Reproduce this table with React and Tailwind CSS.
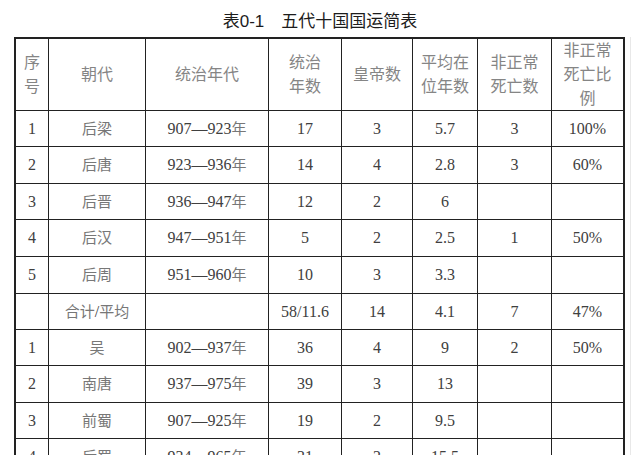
import React from "react";

const rows = [
  ["1", "后梁", "907—923年", "17", "3", "5.7", "3", "100%"],
  ["2", "后唐", "923—936年", "14", "4", "2.8", "3", "60%"],
  ["3", "后晋", "936—947年", "12", "2", "6", "", ""],
  ["4", "后汉", "947—951年", "5", "2", "2.5", "1", "50%"],
  ["5", "后周", "951—960年", "10", "3", "3.3", "", ""],
  ["", "合计/平均", "", "58/11.6", "14", "4.1", "7", "47%"],
  ["1", "吴", "902—937年", "36", "4", "9", "2", "50%"],
  ["2", "南唐", "937—975年", "39", "3", "13", "", ""],
  ["3", "前蜀", "907—925年", "19", "2", "9.5", "", ""],
  ["4", "后蜀", "934—965年", "31", "2", "15.5", "", ""],
];

const headers = [
  ["序", "号"],
  ["朝代"],
  ["统治年代"],
  ["统治", "年数"],
  ["皇帝数"],
  ["平均在", "位年数"],
  ["非正常", "死亡数"],
  ["非正常", "死亡比", "例"],
];

function Rich({ text }) {
  const parts = text.split(/([\u4e00-\u9fff]+)/).filter((p) => p !== "");
  return (
    <span className="whitespace-nowrap">
      {parts.map((p, i) =>
        /[\u4e00-\u9fff]/.test(p) ? (
          <span key={i} className="text-[15px] text-[#777777]">
            {p}
          </span>
        ) : (
          <span key={i} className="text-[16px] text-[#404040]">
            {p}
          </span>
        )
      )}
    </span>
  );
}

export default function App() {
  return (
    <div className="w-[640px] h-[455px] overflow-hidden bg-white">
      <div className="h-[37px] pt-[13px] text-center text-[17px] leading-[17px] text-[#1c1c1c] font-['Liberation_Sans','Noto_Sans_CJK_SC',sans-serif]">
        表0-1　五代十国国运简表
      </div>
      <div className="ml-[14px] w-[617px] border-r border-[#e8e8e8]">
        <div className="w-[611px] border-t-2 border-l-2 border-[#222] grid grid-cols-[33px_97px_123px_73px_71px_65px_74px_73px] grid-rows-[72px_36px_37px_36px_37px_37px_36px_36px_37px_36px_37px] font-['Liberation_Serif','Noto_Sans_CJK_SC',serif]">
          {headers.map((lines, i) => (
            <div
              key={"h" + i}
              className={`flex flex-col items-center justify-center border-b border-[#222] text-[16px] leading-[24px] text-[#858585] ${
                i === 7 ? "border-r-2" : "border-r"
              }`}
            >
              {lines.map((l, j) => (
                <span key={j} className="whitespace-nowrap">
                  {l}
                </span>
              ))}
            </div>
          ))}
          {rows.map((r, ri) =>
            r.map((c, ci) => (
              <div
                key={ri + "-" + ci}
                className={`flex items-center justify-center border-b border-[#222] leading-[20px] ${
                  ci === 7 ? "border-r-2" : "border-r"
                }`}
              >
                {c ? <Rich text={c} /> : null}
              </div>
            ))
          )}
        </div>
      </div>
    </div>
  );
}
